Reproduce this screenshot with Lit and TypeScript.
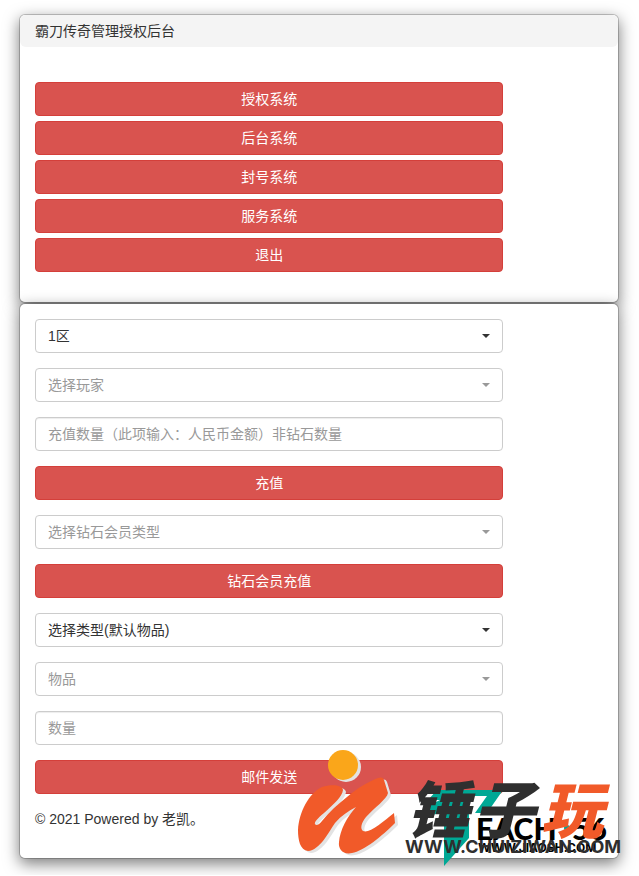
import { LitElement, html, css } from "lit";
import { customElement, property } from "lit/decorators.js";

@customElement("select-field")
class SelectField extends LitElement {
  @property() label = "";
  @property({ type: Array }) options: string[] = [];
  @property({ type: Boolean, reflect: true }) muted = false;

  static styles = css`
    :host {
      display: block;
      position: relative;
      color: #333;
    }
    :host([muted]) {
      color: #999;
    }
    .control {
      display: block;
      box-sizing: border-box;
      width: 100%;
      height: 34px;
      margin: 0;
      padding: 0 32px 0 12px;
      appearance: none;
      border: 1px solid #ccc;
      border-radius: 4px;
      background: #fff;
      color: inherit;
      font: inherit;
    }
    .caret {
      position: absolute;
      top: 15px;
      right: 13px;
      border-top: 4px solid currentColor;
      border-right: 4px solid transparent;
      border-left: 4px solid transparent;
      pointer-events: none;
    }
  `;

  render() {
    return html`
      <select class="control" aria-label=${this.label}>
        ${this.options.map((o) => html`<option>${o}</option>`)}
      </select>
      <span class="caret"></span>
    `;
  }
}

@customElement("site-watermark")
class SiteWatermark extends LitElement {
  static styles = css`
    :host {
      display: block;
      pointer-events: none;
    }
    .art {
      display: block;
      overflow: visible;
    }
    .name {
      font: italic 900 62px "Noto Sans CJK SC", sans-serif;
    }
    .back {
      font: 900 30px "Lato", sans-serif;
    }
    .address {
      font: 700 18px "Inter", sans-serif;
    }
    .small {
      font: 700 12px "Inter", sans-serif;
    }
  `;

  render() {
    return html`
      <svg class="art" width="330" height="120" viewBox="295 746 330 120">
        <defs>
          <path
            id="stroke"
            d="M322 787C332 784 342 785 343 790C342 797 334 804 324 813C318 818 314 822 315 824C316 826 319 825 322 821C329 812 338 804 347 797C357 788 370 781 378 778C381 777 383 777 384 780L388 793C387 799 374 808 366 817C361 823 360 829 363 831C369 834 383 822 394 813L395 823C382 836 364 851 352 853C343 855 338 849 339 842C340 830 347 817 356 807C348 811 341 816 335 823C328 833 320 850 308 851C300 850 298 840 298 830C299 812 309 793 322 787Z"
          />
        </defs>
        <g fill="#e3e3e3">
          <circle cx="346" cy="767" r="15" />
          <use href="#stroke" x="3" y="2" />
        </g>
        <circle cx="343" cy="765" r="15" fill="#faa61a" />
        <use href="#stroke" fill="#f15a29" />
        <path fill="#00a895" d="M437 790H503L487 813H475L487 796H466V804H469V838L444 866V812L428 816V806L440 800H428Z" />
        <circle cx="567" cy="828" r="3" fill="#00a895" />
        <text class="back" x="476" y="840">EACH</text>
        <text class="back" x="572" y="840">56</text>
        <text class="small" x="478" y="852">WWW.JIAOSH.COM</text>
        <g class="name">
          <text x="407" y="833" fill="#2f2f2f">锤</text>
          <text x="473" y="833" fill="#2f2f2f">子</text>
          <text x="541" y="833" fill="#f15a29">玩</text>
        </g>
        <text class="address" x="405" y="853" fill="#2f2f2f">WWW.CHUIZIWAN.COM</text>
      </svg>
    `;
  }
}

@customElement("app-root")
class AppRoot extends LitElement {
  static styles = css`
    :host {
      display: block;
      position: relative;
      padding: 14px 20px 16px 19px;
      color: #333;
      font: 14px/20px "Liberation Sans", "Noto Sans CJK SC", sans-serif;
    }
    .panel {
      border: 1px solid rgba(0, 0, 0, 0.2);
      border-radius: 6px;
      background: #fff;
      background-clip: padding-box;
      box-shadow: 0 5px 15px rgba(0, 0, 0, 0.5);
    }
    .heading {
      margin: 0;
      padding: 6px 15px;
      border-radius: 6px;
      background: #f4f4f4;
      font: inherit;
    }
    .column {
      display: flex;
      flex-direction: column;
      box-sizing: border-box;
      width: calc(100% * 10 / 12);
      padding: 0 15px;
    }
    .menu {
      gap: 5px;
      padding-top: 35px;
      padding-bottom: 30px;
    }
    .form {
      gap: 15px;
      padding-top: 15px;
      padding-bottom: 29px;
    }
    .button,
    .input {
      box-sizing: border-box;
      width: 100%;
      height: 34px;
      margin: 0;
      padding: 0 12px;
      border: 1px solid #ccc;
      border-radius: 4px;
      font: inherit;
    }
    .button {
      border-color: #d43f3a;
      background: #d9534f;
      color: #fff;
    }
    .input {
      background: #fff;
      box-shadow: inset 0 1px 1px rgba(0, 0, 0, 0.075);
      color: #555;
    }
    .input::placeholder {
      color: #999;
      opacity: 1;
    }
    .footer {
      margin: 0;
    }
    .watermark {
      position: absolute;
      right: 14px;
      bottom: 9px;
    }
  `;

  render() {
    return html`
      <section class="panel">
        <h1 class="heading">霸刀传奇管理授权后台</h1>
        <nav class="column menu">
          ${["授权系统", "后台系统", "封号系统", "服务系统", "退出"].map(
            (t) => html`<button class="button" type="button">${t}</button>`
          )}
        </nav>
      </section>
      <section class="panel">
        <div class="column form">
          <select-field label="区服" .options=${["1区"]}></select-field>
          <select-field label="玩家" muted .options=${["选择玩家"]}></select-field>
          <input class="input" aria-label="充值数量" placeholder="充值数量（此项输入：人民币金额）非钻石数量" />
          <button class="button" type="button">充值</button>
          <select-field label="会员类型" muted .options=${["选择钻石会员类型"]}></select-field>
          <button class="button" type="button">钻石会员充值</button>
          <select-field label="类型" .options=${["选择类型(默认物品)"]}></select-field>
          <select-field label="物品" muted .options=${["物品"]}></select-field>
          <input class="input" aria-label="数量" placeholder="数量" />
          <button class="button" type="button">邮件发送</button>
          <p class="footer">© 2021 Powered by 老凯。</p>
        </div>
      </section>
      <site-watermark class="watermark"></site-watermark>
    `;
  }
}
